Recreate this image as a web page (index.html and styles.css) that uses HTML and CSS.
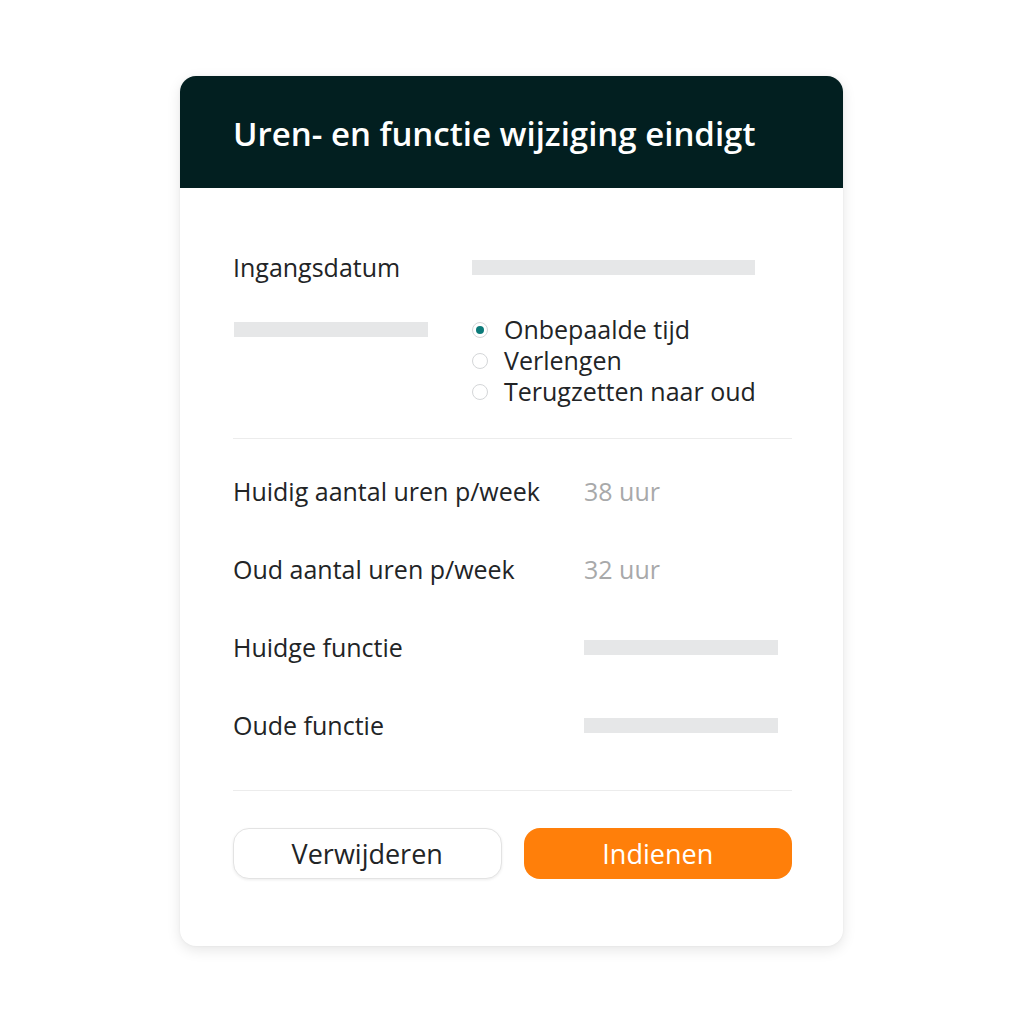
FILE: index.html
```html
<!DOCTYPE html>
<html lang="nl">
<head>
<meta charset="utf-8">
<title>Uren- en functie wijziging eindigt</title>
<link rel="stylesheet" href="styles.css">
</head>
<body>
<div class="card">
  <div class="card-header">
    <h1 class="card-title">Uren- en functie wijziging eindigt</h1>
  </div>
  <div class="card-body">
    <section class="section-top">
      <div class="label">Ingangsdatum</div>
      <div class="bar bar-wide"></div>
      <div class="bar bar-short"></div>
      <ul class="radios">
        <li class="radio-item"><span class="radio checked"></span>Onbepaalde tijd</li>
        <li class="radio-item"><span class="radio"></span>Verlengen</li>
        <li class="radio-item"><span class="radio"></span>Terugzetten naar oud</li>
      </ul>
    </section>
    <hr class="divider">
    <section class="section-details">
      <div class="label">Huidig aantal uren p/week</div>
      <div class="value">38 uur</div>
      <div class="label">Oud aantal uren p/week</div>
      <div class="value">32 uur</div>
      <div class="label">Huidge functie</div>
      <div class="bar bar-mid"></div>
      <div class="label">Oude functie</div>
      <div class="bar bar-mid"></div>
    </section>
    <hr class="divider divider-bottom">
    <div class="actions">
      <button class="btn btn-secondary">Verwijderen</button>
      <button class="btn btn-primary">Indienen</button>
    </div>
  </div>
</div>
</body>
</html>
```
FILE: styles.css
```css
* { box-sizing: border-box; }
html, body { margin: 0; padding: 0; background: #ffffff; }
body {
  font-family: "Open Sans", "Noto Sans", sans-serif;
  color: #222426;
  width: 1024px;
  height: 1024px;
  padding-top: 76px;
  padding-left: 180px;
}
.card {
  width: 663px;
  height: 870px;
  border-radius: 16px;
  background: #fff;
  box-shadow: 0 4px 14px rgba(0,0,0,0.10), 0 0 3px rgba(0,0,0,0.05);
  overflow: hidden;
}
.card-header {
  background: #021f20;
  height: 112px;
  display: flex;
  align-items: center;
  padding-left: 53px;
  padding-top: 3px;
}
.card-title {
  margin: 0;
  color: #fff;
  font-weight: 600;
  font-size: 33px;
  letter-spacing: 0;
}
.card-body {
  padding: 63px 51px 0 53px;
}
.section-top {
  display: grid;
  grid-template-columns: 239px 1fr;
  row-gap: 31px;
  align-items: center;
}
.label {
  font-size: 25px;
  line-height: 32px;
}
.bar { background: #e6e7e8; height: 15px; }
.bar-wide { width: 283px; }
.bar-short { width: 194px; align-self: start; margin-top: 8px; margin-left: 1px; }
.bar-mid { width: 194px; }
.radios { list-style: none; margin: 0; padding: 0; }
.radio-item {
  display: flex;
  align-items: center;
  font-size: 25px;
  line-height: 31px;
}
.radio {
  width: 16px; height: 16px;
  border-radius: 50%;
  border: 1px solid #d4d6d8;
  margin-right: 16px;
  display: inline-flex;
  align-items: center;
  justify-content: center;
  flex: none;
}
.radio.checked::after {
  content: "";
  width: 8px; height: 8px;
  border-radius: 50%;
  background: #0c7b7a;
}
.divider {
  border: 0;
  border-top: 1px solid #ececec;
  margin: 31px 0 0;
}
.divider-bottom { margin-top: 26px; }
.section-details {
  display: grid;
  grid-template-columns: 351px 1fr;
  grid-auto-rows: 78px;
  align-items: center;
  margin-top: 13px;
}
.value { font-size: 25px; color: #a8a9aa; }
.actions {
  display: grid;
  grid-template-columns: 1fr 1fr;
  column-gap: 22px;
  margin-top: 37px;
}
.btn {
  height: 51px;
  border-radius: 16px;
  font-family: inherit;
  font-size: 27px;
  cursor: pointer;
}
.btn-secondary {
  background: #fff;
  color: #222426;
  border: 1px solid #e3e3e3;
  box-shadow: 0 1px 3px rgba(0,0,0,0.08);
}
.btn-primary {
  background: #ff7f0a;
  color: #fff;
  border: 0;
}
```
